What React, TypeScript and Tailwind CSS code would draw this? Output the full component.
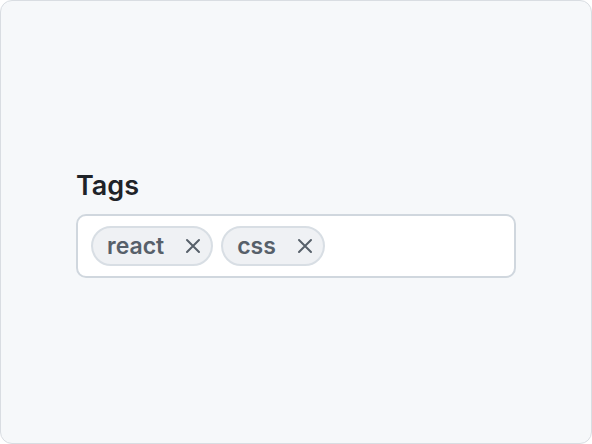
import { useState } from "react";

function Chip({ label, onRemove }: { label: string; onRemove: () => void }) {
  return (
    <span className="flex h-[40px] items-center rounded-full border-2 border-[#d8dee4] bg-[#eff1f4] pl-[14px] pr-[8px] text-[23px] font-semibold text-[#57606a]">
      <span className="leading-none">{label}</span>
      <button
        onClick={onRemove}
        className="ml-[19px] flex h-[20px] w-[20px] items-center justify-center text-[#57606a]"
      >
        <svg width="16" height="16" viewBox="0 0 16 16" fill="none" stroke="currentColor" strokeWidth="2" strokeLinecap="round">
          <path d="M2 2l12 12M14 2L2 14" />
        </svg>
      </button>
    </span>
  );
}

export default function App() {
  const [tags, setTags] = useState(["react", "css"]);

  return (
    <div
      className="flex h-[444px] w-[592px] items-center justify-center rounded-[12px] border border-[#d9dde2] bg-[#f6f8fa] pt-[2px]"
      style={{ fontFamily: "Inter, 'Noto Sans', sans-serif" }}
    >
      <div className="flex w-[440px] flex-col">
        {/* label */}
        <label className="mb-[10px] text-[27px] font-semibold leading-[36px] text-[#1f2328]">Tags</label>
        {/* tag input */}
        <div className="flex h-[64px] items-center gap-[8px] rounded-[10px] border-2 border-[#d0d7de] bg-white px-[13px]">
          {tags.map((tag) => (
            <Chip key={tag} label={tag} onRemove={() => setTags(tags.filter((t) => t !== tag))} />
          ))}
          <input className="min-w-0 flex-1 bg-transparent text-[22px] outline-none" />
        </div>
      </div>
    </div>
  );
}
